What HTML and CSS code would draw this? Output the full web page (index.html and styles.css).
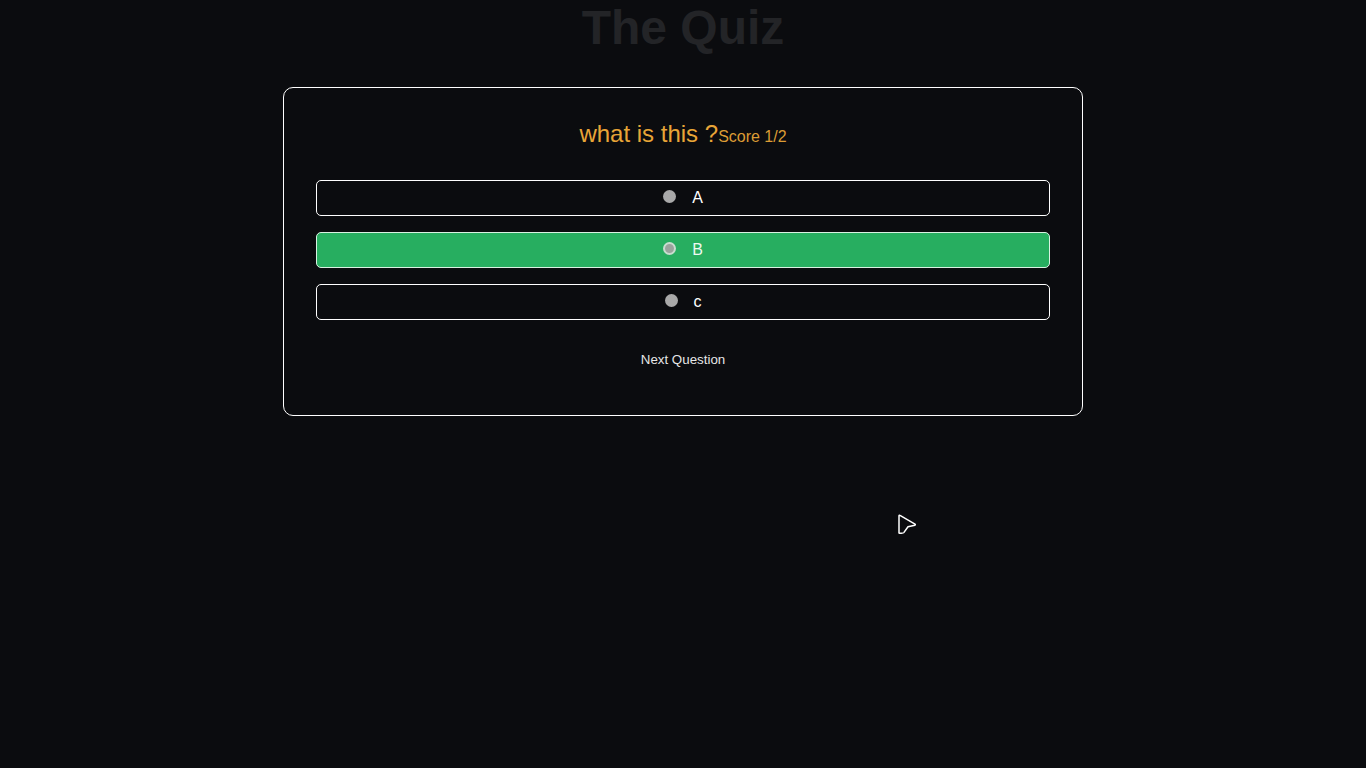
FILE: index.html
```html
<!DOCTYPE html>
<html lang="en">
<head>
<meta charset="utf-8">
<title>The Quiz</title>
<link rel="stylesheet" href="styles.css">
</head>
<body>
  <h1 class="title">The Quiz</h1>
  <main class="card">
    <div class="question">
      <span class="question-text">what is this ?</span><span class="score">Score 1/2</span>
    </div>
    <div class="options">
      <label class="option"><span class="radio"></span><span class="option-label">A</span></label>
      <label class="option option-correct"><span class="radio"></span><span class="option-label">B</span></label>
      <label class="option"><span class="radio"></span><span class="option-label">c</span></label>
    </div>
    <div class="actions">
      <button class="next-btn" type="button">Next Question</button>
    </div>
  </main>
  <svg class="cursor" width="22" height="24" viewBox="0 0 22 24" aria-hidden="true">
    <path d="M2 1.8 C2 1.2 2.6 1 3 1.3 L18 10.2 C18.5 10.5 18.4 11.1 17.9 11.2 L11 12.8 L6.8 18.6 C6.4 19.1 2 19.6 2 19 Z" fill="#0b0c0f" stroke="#ffffff" stroke-width="1.5" stroke-linejoin="round"/>
  </svg>
</body>
</html>
```

FILE: styles.css
```css
html, body {
  margin: 0;
  padding: 0;
}

body {
  background: #0b0c0f;
  font-family: "Liberation Sans", Arial, sans-serif;
  color: #ffffff;
  min-height: 768px;
  position: relative;
}

.title {
  margin: 0 0 32px;
  font-size: 48px;
  font-weight: 700;
  line-height: 55px;
  text-align: center;
  color: #232427;
}

.card {
  box-sizing: border-box;
  width: 800px;
  margin: 0 auto;
  border: 1px solid #ffffff;
  border-radius: 10px;
  padding: 32px 32px 39px;
}

.question {
  text-align: center;
  color: #e8a537;
  height: 28px;
  line-height: 28px;
}

.question-text {
  font-size: 24px;
}

.score {
  font-size: 16px;
  color: #dc9c35;
}

.options {
  display: flex;
  flex-direction: column;
  gap: 16px;
  margin-top: 32px;
}

.option {
  box-sizing: border-box;
  height: 36px;
  border: 1px solid #ffffff;
  border-radius: 5px;
  display: flex;
  justify-content: center;
  align-items: center;
  gap: 16px;
  font-size: 16px;
  color: #ffffff;
}

.radio {
  box-sizing: border-box;
  width: 13px;
  height: 13px;
  border-radius: 50%;
  background: #a9a9a9;
  margin-top: -3px;
}

.option-label {
  line-height: 18px;
}

.option-correct {
  background: #27ae60;
  border-color: #d9f2e2;
  color: #eef8f1;
}

.option-correct .radio {
  background: #9aa39d;
  border: 2px solid #c9dccf;
}

.actions {
  display: flex;
  justify-content: center;
  margin-top: 24px;
}

.next-btn {
  background: transparent;
  border: none;
  color: #e6e6e6;
  font-family: "Liberation Sans", Arial, sans-serif;
  font-size: 13.333px;
  line-height: 16px;
  padding: 8px 16px;
  cursor: pointer;
}

.cursor {
  position: absolute;
  left: 897px;
  top: 514px;
}
```
